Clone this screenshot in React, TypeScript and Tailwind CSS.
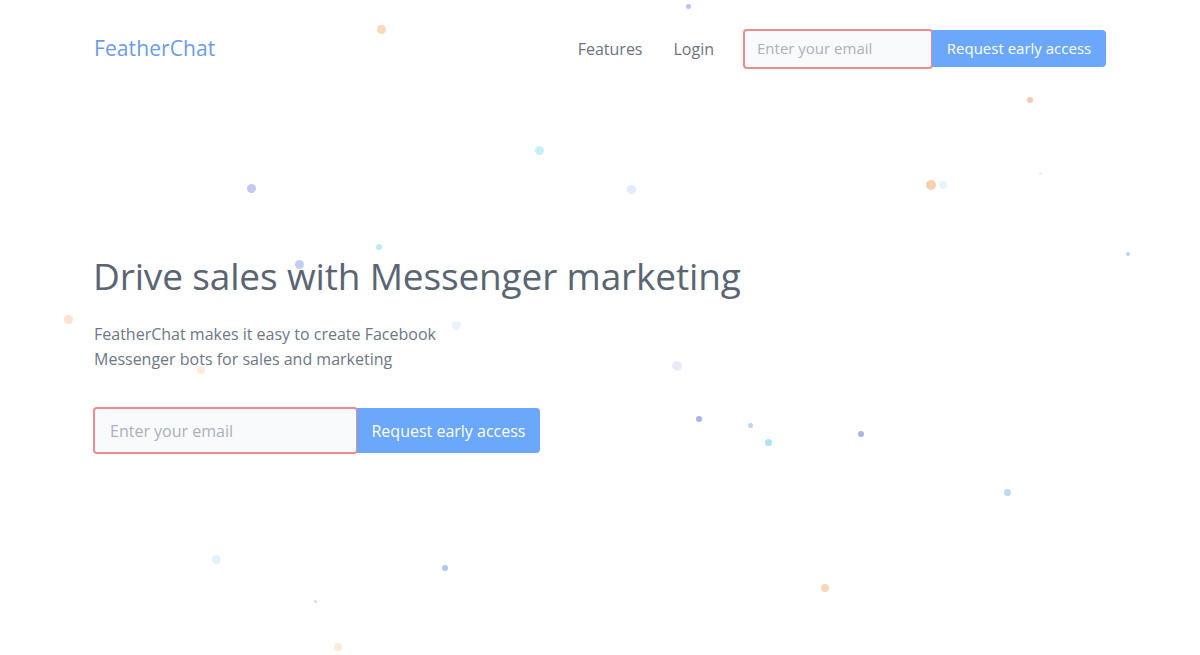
import React from "react";

type Dot = { x: number; y: number; r: number; c: string };

const dots: Dot[] = [
  { x: 381, y: 29, r: 4.5, c: "#f9d9b8" },
  { x: 688, y: 6, r: 2.5, c: "#b8c4f0" },
  { x: 1030, y: 100, r: 3, c: "#f6c9b0" },
  { x: 539, y: 150, r: 4.5, c: "#c7eef7" },
  { x: 251, y: 188, r: 4.5, c: "#c3caf2" },
  { x: 631, y: 189, r: 4.5, c: "#e2ebfb" },
  { x: 931, y: 185, r: 5, c: "#f7cfa8" },
  { x: 943, y: 185, r: 4, c: "#e3f4fb" },
  { x: 1040, y: 173, r: 1.5, c: "#eeeeee" },
  { x: 379, y: 247, r: 3, c: "#bfe7f5" },
  { x: 299, y: 264, r: 4.5, c: "#c5cdf5" },
  { x: 1128, y: 254, r: 2, c: "#b4d6f0" },
  { x: 68, y: 319, r: 4.5, c: "#fbe3d0" },
  { x: 456, y: 325, r: 4.5, c: "#eaf2fd" },
  { x: 201, y: 370, r: 4, c: "#fdebdd" },
  { x: 677, y: 366, r: 5, c: "#e9ebfa" },
  { x: 699, y: 419, r: 3, c: "#a9b4e8" },
  { x: 750, y: 425, r: 2.5, c: "#bcd5f7" },
  { x: 768, y: 442, r: 3.5, c: "#ade2f3" },
  { x: 861, y: 434, r: 3, c: "#aab6e5" },
  { x: 1007, y: 492, r: 3.5, c: "#b9dbf5" },
  { x: 216, y: 559, r: 4.5, c: "#e2f2fc" },
  { x: 445, y: 568, r: 3, c: "#a9c8ee" },
  { x: 825, y: 588, r: 4, c: "#f8d5bb" },
  { x: 315, y: 601, r: 1.5, c: "#e9d9c8" },
  { x: 338, y: 647, r: 4, c: "#fdeadb" },
];

const font = { fontFamily: '"Open Sans", "Noto Sans", sans-serif' };

export default function App() {
  return (
    <div
      className="relative w-[1200px] h-[655px] overflow-hidden bg-white"
      style={font}
    >
      <div className="pointer-events-none absolute inset-0">
        {dots.map((d, i) => (
          <span
            key={i}
            className="absolute rounded-full"
            style={{
              left: d.x - d.r,
              top: d.y - d.r,
              width: d.r * 2,
              height: d.r * 2,
              background: d.c,
            }}
          />
        ))}
      </div>

      <div className="relative flex flex-col px-[94px]">
        <header className="flex items-center justify-between h-[97px]">
          <div className="text-[21px] text-[#6b9de6] tracking-[0.1px] mt-[1px]">FeatherChat</div>
          <nav className="flex items-center">
            <a className="text-[16px] text-[#6b7480] mr-[31px]">Features</a>
            <a className="text-[16px] text-[#6b7480] mr-[29px]">Login</a>
            <div className="flex items-center">
              <div className="w-[190px] h-[40px] flex items-center rounded-[4px] border-2 border-[#ec8c8e] bg-[#f9fafc] pl-[12px] text-[15px] text-[#aab1ba]">
                Enter your email
              </div>
              <button className="h-[37px] w-[174px] -ml-[1px] rounded-r-[4px] bg-[#6ba7fa] text-white text-[15px]">
                Request early access
              </button>
            </div>
          </nav>
        </header>

        <main className="flex flex-col pt-[154px]">
          <h1 className="text-[37px] leading-[50px] text-[#5a6574] -ml-[1px] tracking-[-0.15px]">
            Drive sales with Messenger marketing
          </h1>
          <p className="mt-[21px] text-[16px] leading-[25px] text-[#6c7787]">
            FeatherChat makes it easy to create Facebook
            <br />
            Messenger bots for sales and marketing
          </p>
          <div className="mt-[35px] flex items-center">
            <div className="w-[265px] h-[47px] flex items-center rounded-[4px] border-2 border-[#ec8c8e] bg-[#f9fafc] pl-[15px] text-[16px] text-[#aab1ba] -ml-[1px]">
              Enter your email
            </div>
            <button className="h-[45px] w-[183px] -ml-[1px] rounded-r-[4px] bg-[#6ba7fa] text-white text-[16px]">
              Request early access
            </button>
          </div>
        </main>
      </div>
    </div>
  );
}
